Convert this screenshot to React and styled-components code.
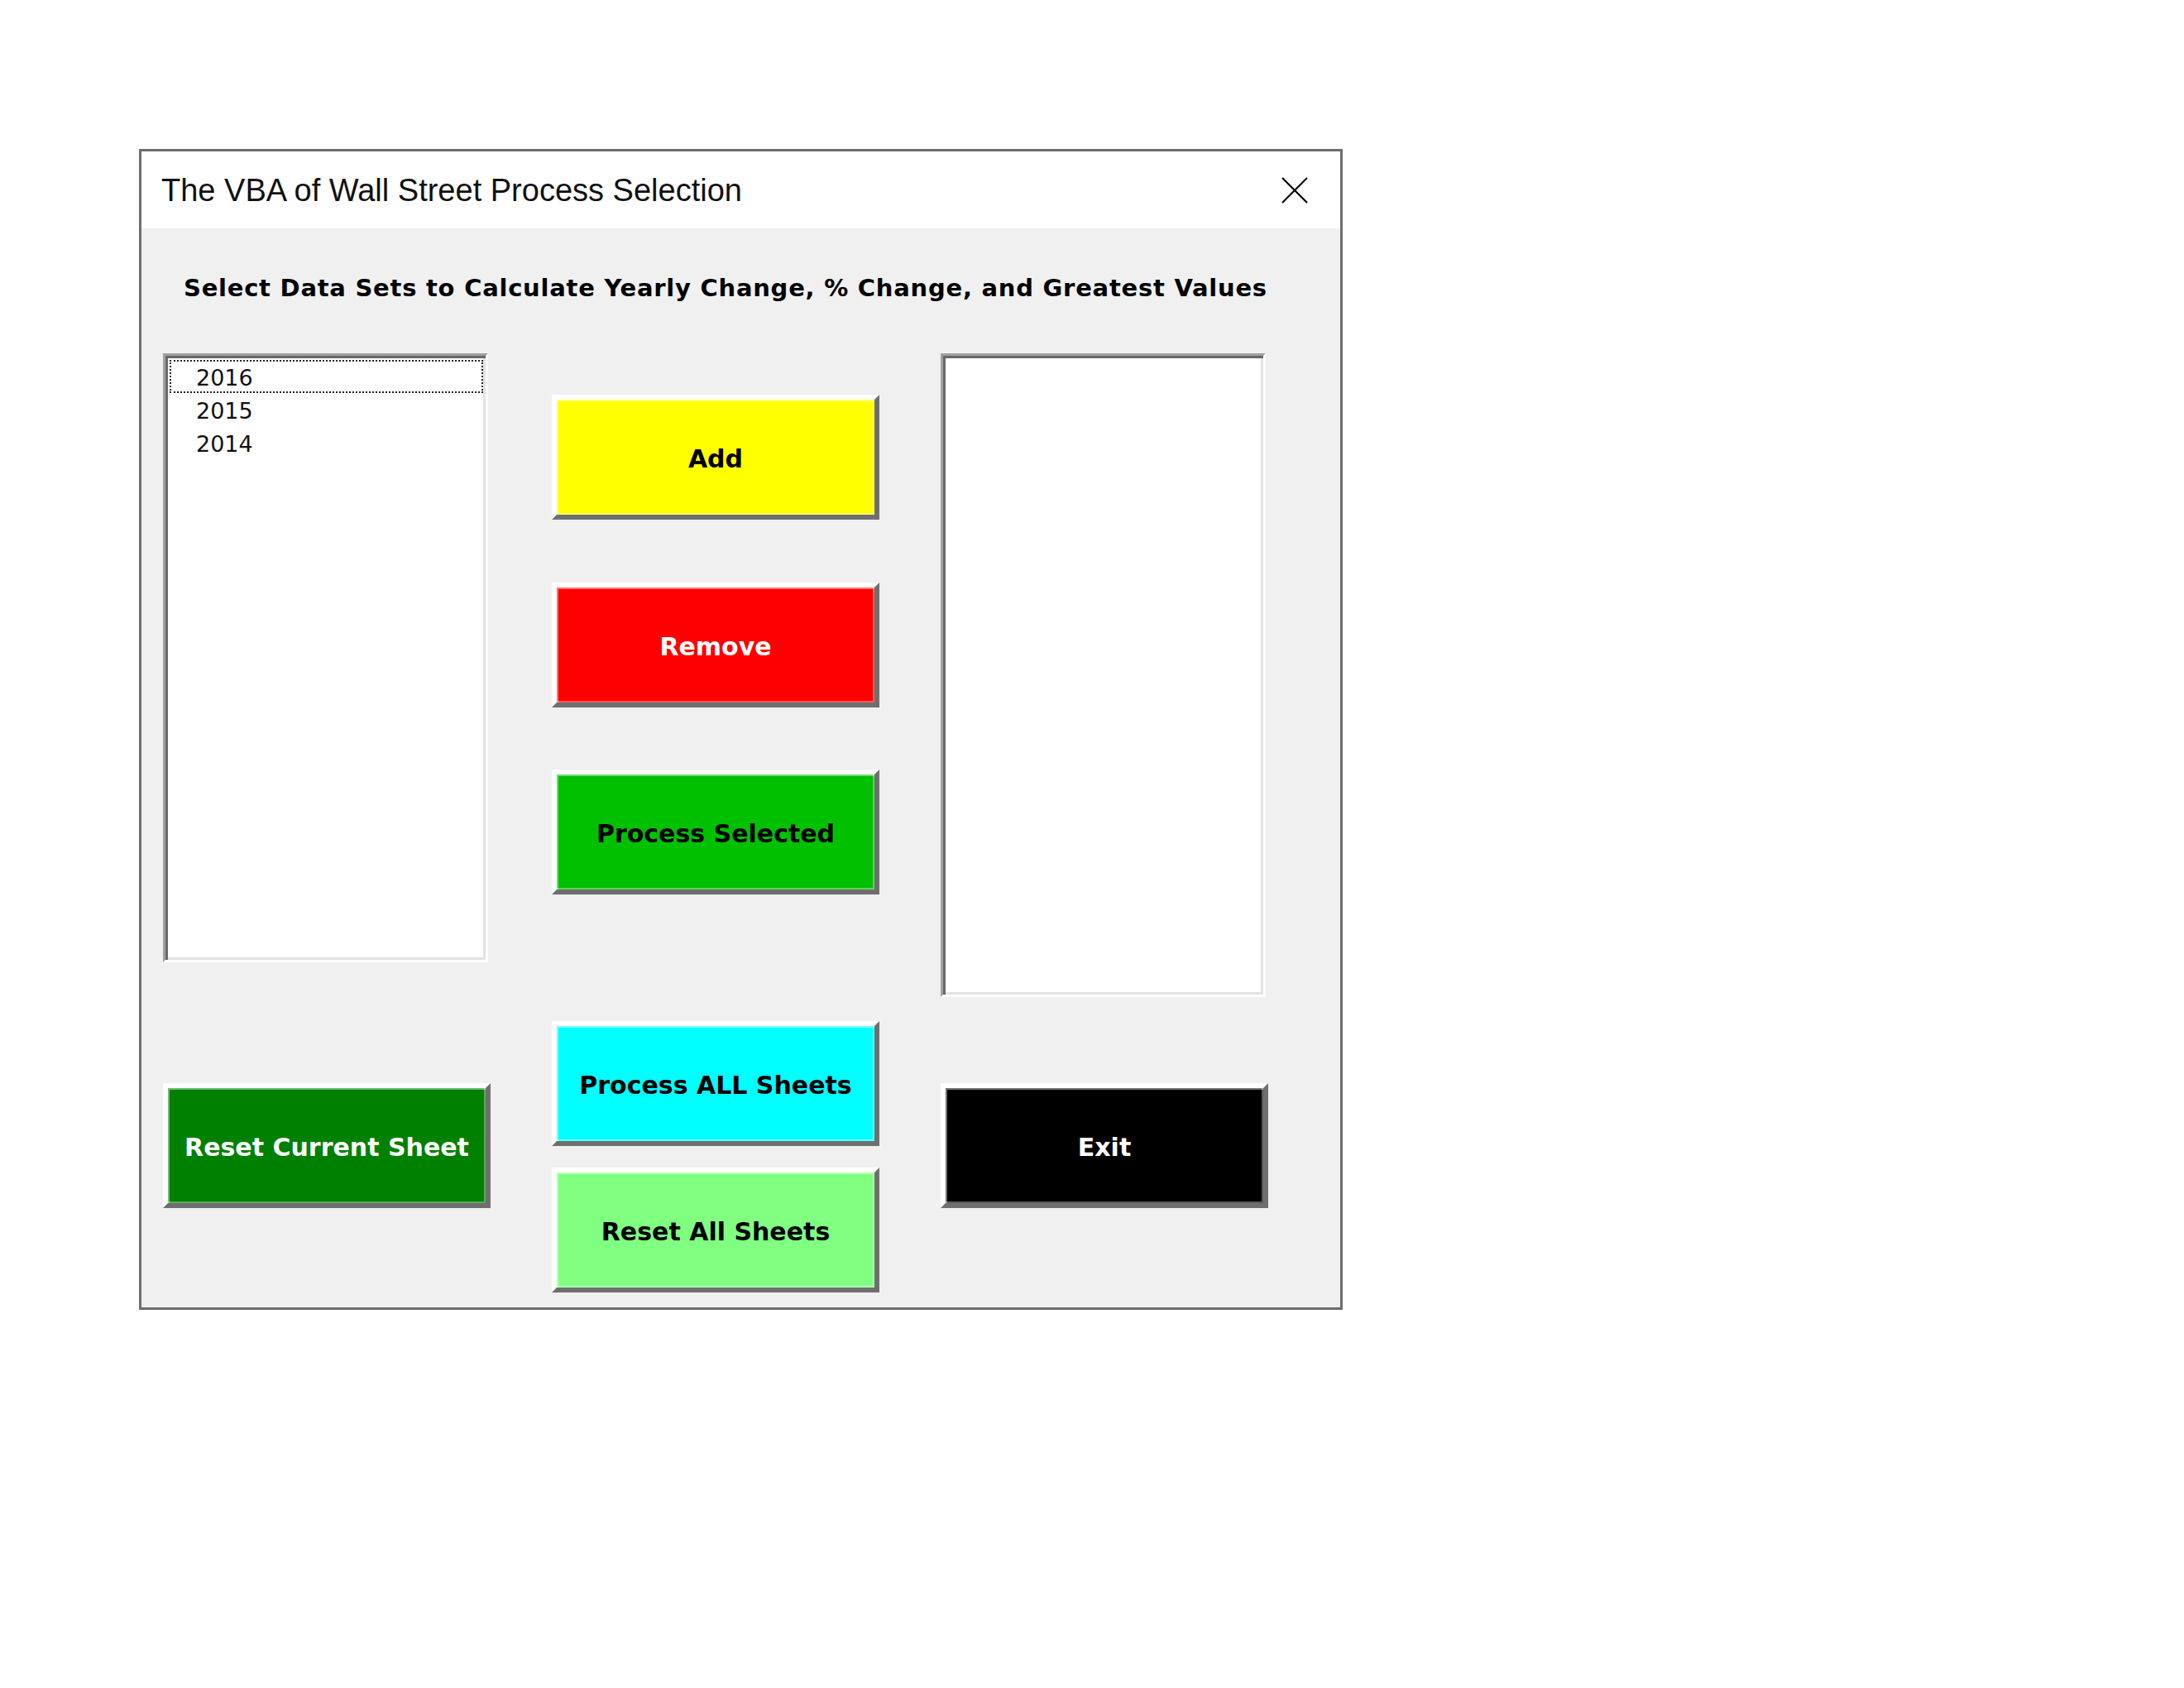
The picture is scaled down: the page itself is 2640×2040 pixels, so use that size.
import React from "react";
import styled, { createGlobalStyle } from "styled-components";

const GlobalStyle = createGlobalStyle`
  html, body {
    margin: 0;
    padding: 0;
    background: #ffffff;
  }
  body {
    font-family: "DejaVu Sans", "Liberation Sans", sans-serif;
  }
  * { box-sizing: border-box; }
`;

const Page = styled.div`
  padding: 180px 0 0 168px;
  min-height: 2040px;
`;

const Dialog = styled.div`
  width: 1455px;
  height: 1403px;
  border: 3px solid #6e6e6e;
  background: #f0f0f0;
  display: flex;
  flex-direction: column;
`;

const TitleBar = styled.div`
  height: 93px;
  flex: none;
  background: #ffffff;
  display: flex;
  align-items: center;
  justify-content: space-between;
  padding: 0 39px 0 24px;
`;

const Title = styled.div`
  font-family: "Liberation Sans", Arial, sans-serif;
  font-size: 38px;
  color: #111;
  line-height: 1;
`;

const CloseButton = styled.div`
  width: 32px;
  height: 32px;
  display: flex;
  align-items: center;
  justify-content: center;
`;

const Body = styled.div`
  flex: 1;
  padding: 52px 0 0 26px;
`;

const Heading = styled.div`
  font-family: "DejaVu Sans", sans-serif;
  font-weight: bold;
  font-size: 29px;
  letter-spacing: 0.75px;
  line-height: 40px;
  color: #000;
  margin-left: 25px;
  white-space: nowrap;
`;

const Columns = styled.div`
  margin-top: 59px;
  display: grid;
  grid-template-columns: 396px 396px 396px;
  column-gap: 74px;
  align-items: start;
`;

const Column = styled.div`
  display: flex;
  flex-direction: column;
  align-items: flex-start;
`;

const ListBox = styled.div`
  width: 393px;
  height: ${(p) => p.$h}px;
  background: #ffffff;
  border: 3px solid;
  border-color: #a0a0a0 #ffffff #ffffff #a0a0a0;
  box-shadow: inset 3px 3px 0 0 #696969, inset -3px -3px 0 0 #e3e3e3;
  padding: 5px 3px 3px 5px;
  display: flex;
  flex-direction: column;
`;

const ListItem = styled.div`
  height: 40px;
  display: flex;
  align-items: center;
  padding-left: 30px;
  padding-top: 2px;
  font-family: "DejaVu Sans", sans-serif;
  font-size: 27px;
  color: #111;
  border: 2px dotted ${(p) => (p.$focused ? "#222" : "transparent")};
`;

const Button = styled.div`
  width: 396px;
  height: 151px;
  margin-top: ${(p) => p.$mt || 0}px;
  background: ${(p) => p.$bg};
  color: ${(p) => p.$fg};
  border: 6px solid;
  border-color: #ffffff #6f6f6f #6f6f6f #ffffff;
  box-shadow: inset 2px 2px 0 0 rgba(255, 255, 255, 0.45),
    inset -2px -2px 0 0 rgba(255, 255, 255, 0.35);
  display: flex;
  align-items: center;
  justify-content: center;
  padding-top: 4px;
  font-family: "DejaVu Sans", sans-serif;
  font-weight: bold;
  font-size: 30px;
  white-space: nowrap;
`;

const items = ["2016", "2015", "2014"];

export default function App() {
  return (
    <>
      <GlobalStyle />
      <Page>
        <Dialog>
          <TitleBar>
            <Title>The VBA of Wall Street Process Selection</Title>
            <CloseButton>
              <svg width="32" height="32" viewBox="0 0 32 32">
                <line x1="1" y1="1" x2="31" y2="31" stroke="#000" strokeWidth="2.2" />
                <line x1="31" y1="1" x2="1" y2="31" stroke="#000" strokeWidth="2.2" />
              </svg>
            </CloseButton>
          </TitleBar>
          <Body>
            <Heading>
              Select Data Sets to Calculate Yearly Change, % Change, and Greatest Values
            </Heading>
            <Columns>
              <Column>
                <ListBox $h={736}>
                  {items.map((y, i) => (
                    <ListItem key={y} $focused={i === 0}>
                      {y}
                    </ListItem>
                  ))}
                </ListBox>
                <Button $mt={146} $bg="#008000" $fg="#ffffff">
                  Reset Current Sheet
                </Button>
              </Column>
              <Column>
                <Button $mt={50} $bg="#ffff00" $fg="#000000">
                  Add
                </Button>
                <Button $mt={76} $bg="#ff0000" $fg="#ffffff">
                  Remove
                </Button>
                <Button $mt={75} $bg="#00c000" $fg="#000000">
                  Process Selected
                </Button>
                <Button $mt={153} $bg="#00ffff" $fg="#000000">
                  Process ALL Sheets
                </Button>
                <Button $mt={26} $bg="#80ff80" $fg="#000000">
                  Reset All Sheets
                </Button>
              </Column>
              <Column>
                <ListBox $h={778} />
                <Button $mt={104} $bg="#000000" $fg="#ffffff">
                  Exit
                </Button>
              </Column>
            </Columns>
          </Body>
        </Dialog>
      </Page>
    </>
  );
}
